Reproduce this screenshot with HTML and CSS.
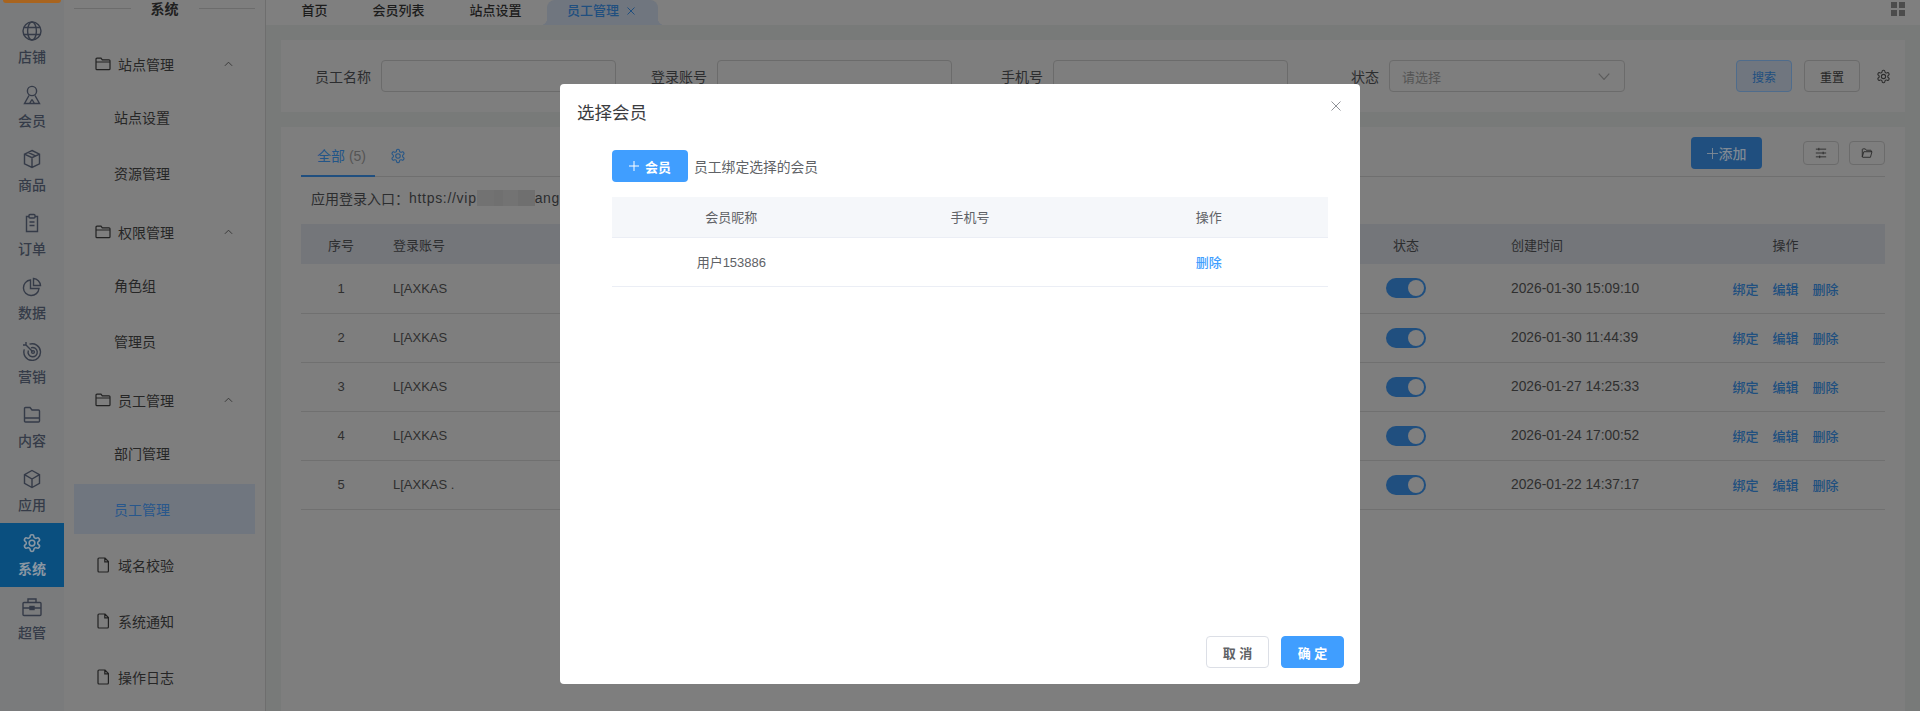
FILE: index.html
```html
<!DOCTYPE html>
<html lang="zh-CN">
<head>
    <meta charset="UTF-8">
    <title>员工管理</title>
    <link rel="stylesheet" href="styles.css">
</head>
<body>
    <svg class="icon-defs" width="0" height="0">
        <symbol id="i-gear" viewBox="0 0 24 24"><path d="M12.22 2h-.44a2 2 0 0 0-2 2v.18a2 2 0 0 1-1 1.73l-.43.25a2 2 0 0 1-2 0l-.15-.08a2 2 0 0 0-2.73.73l-.22.38a2 2 0 0 0 .73 2.73l.15.1a2 2 0 0 1 1 1.72v.51a2 2 0 0 1-1 1.74l-.15.09a2 2 0 0 0-.73 2.73l.22.38a2 2 0 0 0 2.73.73l.15-.08a2 2 0 0 1 2 0l.43.25a2 2 0 0 1 1 1.73V20a2 2 0 0 0 2 2h.44a2 2 0 0 0 2-2v-.18a2 2 0 0 1 1-1.73l.43-.25a2 2 0 0 1 2 0l.15.08a2 2 0 0 0 2.73-.73l.22-.39a2 2 0 0 0-.73-2.73l-.15-.08a2 2 0 0 1-1-1.74v-.5a2 2 0 0 1 1-1.74l.15-.09a2 2 0 0 0 .73-2.73l-.22-.38a2 2 0 0 0-2.73-.73l-.15.08a2 2 0 0 1-2 0l-.43-.25a2 2 0 0 1-1-1.73V4a2 2 0 0 0-2-2z"/><circle cx="12" cy="12" r="3.4"/></symbol>
        <symbol id="i-folder" viewBox="0 0 16 16"><path d="M1 3.2c0-.6.4-1 1-1h4l1.3 1.6H14c.6 0 1 .4 1 1v7.9c0 .6-.4 1-1 1H2c-.6 0-1-.4-1-1zM1 6h14"/></symbol>
        <symbol id="i-file" viewBox="0 0 16 16"><path d="M3 2c0-.6.4-1 1-1h6l3.4 3.6v9.4c0 .6-.4 1-1 1H4c-.6 0-1-.4-1-1zM9.8 1v3.8h3.6"/></symbol>
        <symbol id="i-up" viewBox="0 0 10 6"><path d="M1 5l4-4 4 4"/></symbol>
    </svg>

    <div class="app">
        <nav class="rail">
            <div class="rail-logo"></div>
            <a class="rail-item">
                <svg viewBox="0 0 20 20"><circle cx="10" cy="10" r="9"/><ellipse cx="10" cy="10" rx="4.4" ry="9"/><path d="M2 6.500h16M2 13.500h16"/></svg>
                <span>店铺</span>
            </a>
            <a class="rail-item">
                <svg viewBox="0 0 20 20"><circle cx="10" cy="6" r="4.600"/><path d="M7 10.500L2.500 18.500h15L13 10.500M10 14.500l-2.500 4M10 14.500l2.500 4"/></svg>
                <span>会员</span>
            </a>
            <a class="rail-item">
                <svg viewBox="0 0 20 20"><path d="M10 1.500l7.500 3.600v9.800L10 18.500l-7.500-3.600V5.100zM2.500 5.100L10 8.700l7.500-3.600M10 8.700v9.800M6 3.300l7.500 3.600"/></svg>
                <span>商品</span>
            </a>
            <a class="rail-item">
                <svg viewBox="0 0 20 20"><path d="M7 3.500H4.500v15h11v-15H13"/><rect x="7" y="1.500" width="6" height="3.500" rx="1"/><path d="M7.500 9h5M7.500 12.500h5"/></svg>
                <span>订单</span>
            </a>
            <a class="rail-item">
                <svg viewBox="0 0 20 20"><path d="M8.500 3a7.800 7.800 0 1 0 8.500 8.500H8.500z"/><path d="M11.500 1.500a7.500 7.500 0 0 1 7 7h-7z"/></svg>
                <span>数据</span>
            </a>
            <a class="rail-item">
                <svg viewBox="0 0 20 20"><path d="M7.500 3.200a8.300 8.300 0 1 1-5.200 5.200"/><path d="M9 6.900a4.600 4.600 0 1 1-2.600 2.600"/><circle cx="11" cy="11" r="1.400"/><path d="M10.500 10.500L4 4M4 1L4 4L1 4"/></svg>
                <span>营销</span>
            </a>
            <a class="rail-item">
                <svg viewBox="0 0 20 20"><path d="M2.500 3.500c0-.6.400-1 1-1h4.500l2 2.500h6.500c.6 0 1 .4 1 1v10c0 .6-.4 1-1 1h-13c-.6 0-1-.4-1-1zM2.500 13h15"/></svg>
                <span>内容</span>
            </a>
            <a class="rail-item">
                <svg viewBox="0 0 20 20"><path d="M10 1.500l7.500 4.200v8.600L10 18.500l-7.500-4.200V5.700zM2.500 5.700L10 10l7.500-4.300M10 10v8.500"/></svg>
                <span>应用</span>
            </a>
            <a class="rail-item active">
                <svg viewBox="0 0 24 24"><use href="#i-gear"/></svg>
                <span>系统</span>
            </a>
            <a class="rail-item">
                <svg viewBox="0 0 20 20"><rect x="1" y="5.500" width="18" height="13" rx="1"/><path d="M6 5.500V2h8v3.500M1 11h18"/><rect x="8" y="9.500" width="4" height="3" fill="currentColor"/></svg>
                <span>超管</span>
            </a>
        </nav>

        <aside class="side-menu">
            <div class="menu-title"><span>系统</span></div>
            <div class="menu-group">
                <svg class="menu-icon"><use href="#i-folder"/></svg>站点管理
                <svg class="menu-arrow"><use href="#i-up"/></svg>
            </div>
            <div class="menu-child">站点设置</div>
            <div class="menu-child">资源管理</div>
            <div class="menu-group">
                <svg class="menu-icon"><use href="#i-folder"/></svg>权限管理
                <svg class="menu-arrow"><use href="#i-up"/></svg>
            </div>
            <div class="menu-child">角色组</div>
            <div class="menu-child">管理员</div>
            <div class="menu-group">
                <svg class="menu-icon"><use href="#i-folder"/></svg>员工管理
                <svg class="menu-arrow"><use href="#i-up"/></svg>
            </div>
            <div class="menu-child">部门管理</div>
            <div class="menu-child current">员工管理</div>
            <div class="menu-leaf"><svg class="menu-icon"><use href="#i-file"/></svg>域名校验</div>
            <div class="menu-leaf"><svg class="menu-icon"><use href="#i-file"/></svg>系统通知</div>
            <div class="menu-leaf"><svg class="menu-icon"><use href="#i-file"/></svg>操作日志</div>
        </aside>

        <main class="main">
            <header class="tabbar">
                <a class="tab">首页</a>
                <a class="tab">会员列表</a>
                <a class="tab">站点设置</a>
                <a class="tab active">员工管理
                    <svg class="tab-close" viewBox="0 0 8 8"><path d="M.5.500l7 7M7.500.500l-7 7"/></svg>
                </a>
                <div class="grid-btn"><i></i><i></i><i></i><i></i></div>
            </header>

            <div class="content">
                <section class="card search-card">
                    <div class="form-item"><label class="form-label">员工名称</label><div class="input"></div></div>
                    <div class="form-item"><label class="form-label">登录账号</label><div class="input"></div></div>
                    <div class="form-item"><label class="form-label">手机号</label><div class="input"></div></div>
                    <div class="form-item">
                        <label class="form-label">状态</label>
                        <div class="input select">请选择
                            <svg viewBox="0 0 10 6"><path d="M.5.500L5 5.500l4.500-5"/></svg>
                        </div>
                    </div>
                    <div class="search-actions">
                        <button class="btn btn-search">搜索</button>
                        <button class="btn">重置</button>
                        <svg class="search-gear"><use href="#i-gear"/></svg>
                    </div>
                </section>

                <section class="card list-card">
                    <div class="list-head">
                        <div class="list-tab">全部 <em>(5)</em></div>
                        <svg class="list-gear"><use href="#i-gear"/></svg>
                        <div class="list-tools">
                            <button class="btn-add"><svg viewBox="0 0 12 12"><path d="M6 0v12M0 6h12"/></svg>添加</button>
                            <button class="btn-tool">
                                <svg viewBox="0 0 14 14"><path d="M1 2.500h12M1 7h12M1 11.500h12M4.500 1v3M9.500 5.500v3M5.500 10v3"/></svg>
                            </button>
                            <button class="btn-tool">
                                <svg viewBox="0 0 14 14"><path d="M1.500 3c0-.5.300-.8.800-.8h2.700l1.200 1.600h5c.5 0 .8.300.8.800v1.200M1.500 3v8.500l1.800-6h9.500l-1.800 6.500H2.200c-.4 0-.7-.2-.7-.5"/></svg>
                            </button>
                        </div>
                    </div>
                    <p class="entry">应用登录入口：<span class="entry-url">https://vip<i class="mosaic"></i>ang.</span></p>
                    <table class="staff-table">
                        <colgroup>
                            <col class="c-seq"><col class="c-account"><col class="c-state"><col class="c-date"><col class="c-ops">
                        </colgroup>
                        <thead>
                            <tr><th>序号</th><th class="left">登录账号</th><th>状态</th><th class="left">创建时间</th><th>操作</th></tr>
                        </thead>
                        <tbody>
                            <tr><td>1</td><td class="left">L[AXKAS</td><td><span class="switch"></span></td><td class="left date">2026-01-30 15:09:10</td><td class="ops"><a>绑定</a><a>编辑</a><a>删除</a></td></tr>
                            <tr><td>2</td><td class="left">L[AXKAS</td><td><span class="switch"></span></td><td class="left date">2026-01-30 11:44:39</td><td class="ops"><a>绑定</a><a>编辑</a><a>删除</a></td></tr>
                            <tr><td>3</td><td class="left">L[AXKAS</td><td><span class="switch"></span></td><td class="left date">2026-01-27 14:25:33</td><td class="ops"><a>绑定</a><a>编辑</a><a>删除</a></td></tr>
                            <tr><td>4</td><td class="left">L[AXKAS</td><td><span class="switch"></span></td><td class="left date">2026-01-24 17:00:52</td><td class="ops"><a>绑定</a><a>编辑</a><a>删除</a></td></tr>
                            <tr><td>5</td><td class="left">L[AXKAS .</td><td><span class="switch"></span></td><td class="left date">2026-01-22 14:37:17</td><td class="ops"><a>绑定</a><a>编辑</a><a>删除</a></td></tr>
                        </tbody>
                    </table>
                </section>
            </div>
        </main>
    </div>

    <div class="dialog">
        <div class="dialog-head">选择会员</div>
        <svg class="dialog-close" viewBox="0 0 10 10"><path d="M.5.500l9 9M9.500.500l-9 9"/></svg>
        <div class="dialog-body">
            <div class="dialog-toolbar">
                <button class="btn-member"><svg viewBox="0 0 10 10"><path d="M5 0v10M0 5h10"/></svg>会员</button>
                <span>员工绑定选择的会员</span>
            </div>
            <table class="member-table">
                <thead>
                    <tr><th>会员昵称</th><th>手机号</th><th>操作</th></tr>
                </thead>
                <tbody>
                    <tr><td>用户153886</td><td></td><td><a class="link">删除</a></td></tr>
                </tbody>
            </table>
        </div>
        <div class="dialog-foot">
            <button class="btn-cancel">取 消</button>
            <button class="btn-ok">确 定</button>
        </div>
    </div>
</body>
</html>
```

FILE: styles.css
```css
* {
    box-sizing: border-box;
}
html, body {
    margin: 0;
    height: 711px;
    overflow: hidden;
}
body {
    font-family: "Liberation Sans", "Noto Sans CJK SC", sans-serif;
    font-size: 14px;
    color: #262626;
    background: #787a79;
    position: relative;
}
button {
    font-family: inherit;
    cursor: pointer;
}
svg {
    fill: none;
    stroke: currentColor;
}
.icon-defs {
    position: absolute;
}
.app {
    display: flex;
    height: 711px;
}

/* left icon rail */
.rail {
    width: 64px;
    flex: none;
    background: #7a7b7c;
    color: #353b48;
}
.rail-logo {
    height: 3px;
    margin: 0 3px 8px;
    background: #a8641f;
    border-radius: 0 0 8px 8px;
}
.rail-item {
    display: flex;
    flex-direction: column;
    align-items: center;
    height: 64px;
    padding-top: 10px;
}
.rail-item svg {
    width: 20px;
    height: 20px;
    stroke-width: 1.4;
}
.rail-item span {
    margin-top: 6px;
    line-height: 20px;
    font-weight: 500;
}
.rail-item.active {
    background: #0a4f7f;
    color: #8a97a3;
}
.rail-item.active span {
    font-weight: 700;
}
.rail-item.active svg {
    stroke-width: 1.9;
}

/* second level menu */
.side-menu {
    width: 202px;
    flex: none;
    background: #7e7e7e;
    border-right: 1px solid #6e6e6e;
    padding: 0 10px;
}
.menu-title {
    display: flex;
    align-items: center;
    justify-content: center;
    gap: 20px;
    height: 16px;
    margin-bottom: 20px;
    font-weight: 700;
    color: #202020;
}
.menu-title::before,
.menu-title::after {
    content: "";
    flex: 1;
    height: 1px;
    background: #6c6c6c;
}
.menu-group {
    display: flex;
    align-items: center;
    height: 56px;
    padding-left: 21px;
}
.menu-icon {
    width: 16px;
    height: 16px;
    margin-right: 7px;
    stroke: #222;
    stroke-width: 1.2;
}
.menu-arrow {
    width: 9px;
    height: 6px;
    margin-left: auto;
    margin-right: 22px;
    stroke: #333;
}
.menu-child,
.menu-leaf {
    display: flex;
    align-items: center;
    height: 50px;
    margin-bottom: 6px;
    padding-left: 40px;
}
.menu-leaf {
    padding-left: 21px;
}
.menu-child.current {
    background: #70767f;
    color: #28578c;
}

/* top tabs */
.main {
    flex: 1;
    min-width: 0;
}
.tabbar {
    display: flex;
    align-items: flex-start;
    height: 25px;
    padding-left: 13px;
    background: #7f7f7f;
    font-size: 13px;
    font-weight: 500;
    color: #1c1c1c;
}
.tab {
    padding: 0 22.5px;
    line-height: 21px;
    white-space: nowrap;
}
.tab.active {
    position: relative;
    display: flex;
    align-items: center;
    height: 25px;
    padding: 0 23px 4px 20px;
    margin-left: 3px;
    background: #70767f;
    border-radius: 8px 8px 0 0;
    color: #204f7f;
}
.tab.active::before,
.tab.active::after {
    content: "";
    position: absolute;
    bottom: 0;
    width: 7px;
    height: 7px;
}
.tab.active::before {
    left: -7px;
    background: radial-gradient(circle at 0 0, transparent 7px, #70767f 7.500px);
}
.tab.active::after {
    right: -7px;
    background: radial-gradient(circle at 100% 0, transparent 7px, #70767f 7.500px);
}
.tab-close {
    width: 8px;
    height: 8px;
    margin-left: 8px;
}
.grid-btn {
    display: grid;
    grid-template-columns: 6px 6px;
    gap: 2px;
    margin: 2px 15px 0 auto;
}
.grid-btn i {
    height: 6px;
    background: #4c4c4c;
}

/* page cards */
.content {
    padding: 15px 15px 0;
}
.card {
    background: #7e7e7e;
}
.search-card {
    display: flex;
    align-items: center;
    height: 72px;
    padding: 0 14px 0 34px;
    gap: 35px;
    margin-bottom: 15px;
}
.form-item {
    display: flex;
    align-items: center;
    gap: 10px;
}
.form-label {
    width: 56px;
    text-align: right;
    color: #2c2d2f;
}
.input {
    width: 235px;
    height: 32px;
    border: 1px solid #6b6b6b;
    border-radius: 4px;
}
.select {
    display: flex;
    align-items: center;
    justify-content: space-between;
    width: 236px;
    padding: 0 14px 0 12px;
    font-size: 13px;
    color: #555;
}
.select svg {
    width: 12px;
    height: 7px;
    stroke: #5c5c5c;
}
.search-actions {
    display: flex;
    align-items: center;
    gap: 12px;
    margin-left: auto;
}
.btn {
    width: 56px;
    height: 32px;
    padding: 0;
    background: transparent;
    border: 1px solid #6b6b6b;
    border-radius: 4px;
    font-size: 12px;
    color: #262626;
}
.btn-search {
    background: #70767f;
    border-color: #4f6c8c;
    color: #204f7f;
}
.search-gear {
    width: 15px;
    height: 15px;
    margin-left: 4px;
    stroke: #2c2c2c;
    stroke-width: 1.7;
}

/* list */
.list-card {
    height: 600px;
    padding: 0 20px;
}
.list-head {
    display: flex;
    align-items: flex-start;
    height: 50px;
    border-bottom: 1px solid #6f6f6f;
}
.list-tab {
    width: 74px;
    height: 50px;
    padding: 19px 0 0 16px;
    line-height: 20px;
    border-bottom: 2px solid #204f7f;
    color: #235588;
}
.list-tab em {
    font-style: normal;
    color: #555;
}
.list-gear {
    width: 16px;
    height: 16px;
    margin: 21px 0 0 15px;
    stroke: #235588;
    stroke-width: 1.6;
}
.list-tools {
    display: flex;
    align-items: center;
    margin-left: auto;
    margin-top: 10px;
}
.btn-add {
    display: flex;
    align-items: center;
    justify-content: center;
    gap: 1px;
    width: 71px;
    height: 32px;
    margin-right: 41px;
    padding: 0;
    border: 0;
    border-radius: 4px;
    background: #204f7f;
    color: #7f8994;
    font-size: 14px;
    font-weight: 500;
}
.btn-add svg {
    width: 11px;
    height: 11px;
}
.btn-tool {
    display: flex;
    align-items: center;
    justify-content: center;
    width: 36px;
    height: 24px;
    margin-left: 10px;
    padding: 0;
    background: transparent;
    border: 1px solid #6b6b6b;
    border-radius: 4px;
    color: #262626;
}
.btn-add + .btn-tool {
    margin-left: 0;
}
.btn-tool svg {
    width: 12px;
    height: 12px;
}
.entry {
    display: flex;
    align-items: center;
    height: 20px;
    margin: 11px 0 16px 10px;
    color: #2c2d2f;
}
.entry-url {
    display: flex;
    align-items: center;
    letter-spacing: .7px;
}
.mosaic {
    display: block;
    width: 58px;
    height: 16px;
    background: linear-gradient(90deg, #727272 0 30%, #707070 30% 45%, #737373 45% 70%, #6f6f6f 70% 100%);
}
.staff-table {
    width: 1584px;
    table-layout: fixed;
    border-collapse: collapse;
    font-size: 13px;
    color: #2f2f2f;
}
.c-seq { width: 80px; }
.c-account { width: 933px; }
.c-state { width: 184px; }
.c-date { width: 188px; }
.c-ops { width: 199px; }
.staff-table th {
    height: 40px;
    padding: 0;
    background: #74767a;
    font-weight: 400;
    text-align: center;
    color: #2c2d2f;
}
.staff-table td {
    height: 49px;
    padding: 0;
    text-align: center;
    border-bottom: 1px solid #707070;
}
.staff-table .left {
    text-align: left;
    padding-left: 12px;
}
.staff-table .date {
    padding-left: 13px;
    font-size: 13.800px;
}
.staff-table th:nth-child(4) {
    padding-left: 13px;
}
.switch {
    display: block;
    position: relative;
    width: 40px;
    height: 20px;
    margin: 0 auto;
    border-radius: 10px;
    background: #204f7f;
}
.switch::after {
    content: "";
    position: absolute;
    top: 2px;
    right: 2px;
    width: 16px;
    height: 16px;
    border-radius: 50%;
    background: #7f7f7f;
}
.ops a {
    margin: 0 7px;
    font-size: 13px;
    font-weight: 500;
    color: #204f7f;
}

/* dialog sits over the dimmed page */
.dialog {
    position: absolute;
    left: 560px;
    top: 84px;
    display: flex;
    flex-direction: column;
    width: 800px;
    height: 600px;
    background: #fff;
    border-radius: 4px;
}
.dialog-head {
    padding: 17px;
    font-size: 17.500px;
    line-height: 24px;
    color: #3b3c3f;
}
.dialog-close {
    position: absolute;
    top: 17px;
    right: 19px;
    width: 10px;
    height: 10px;
    stroke: #909399;
}
.dialog-body {
    flex: 1;
    padding: 8px 32px 0 52px;
}
.dialog-toolbar {
    display: flex;
    align-items: center;
    gap: 6px;
    margin-bottom: 15px;
    font-size: 13.800px;
    color: #606266;
}
.btn-member {
    display: flex;
    align-items: center;
    justify-content: center;
    gap: 6px;
    width: 76px;
    height: 32px;
    padding: 0;
    border: 0;
    border-radius: 4px;
    background: #409eff;
    color: #fff;
    font-size: 13px;
    font-weight: 700;
}
.btn-member svg {
    width: 10px;
    height: 10px;
}
.member-table {
    width: 716px;
    table-layout: fixed;
    border-collapse: collapse;
    font-size: 13px;
    color: #606266;
}
.member-table th {
    height: 40px;
    padding: 0;
    background: #f5f7fa;
    border-bottom: 1px solid #ebeef5;
    font-weight: 400;
}
.member-table td {
    height: 49px;
    padding: 0;
    text-align: center;
    border-bottom: 1px solid #ebeef5;
}
.link {
    color: #409eff;
    font-weight: 500;
}
.dialog-foot {
    display: flex;
    justify-content: flex-end;
    gap: 12px;
    padding: 0 16px 16px;
}
.btn-cancel,
.btn-ok {
    width: 63px;
    height: 32px;
    padding: 0;
    border-radius: 4px;
    font-size: 13px;
    font-weight: 700;
}
.btn-cancel {
    background: #fff;
    border: 1px solid #dcdfe6;
    color: #606266;
}
.btn-ok {
    background: #409eff;
    border: 1px solid #409eff;
    color: #fff;
}
```
